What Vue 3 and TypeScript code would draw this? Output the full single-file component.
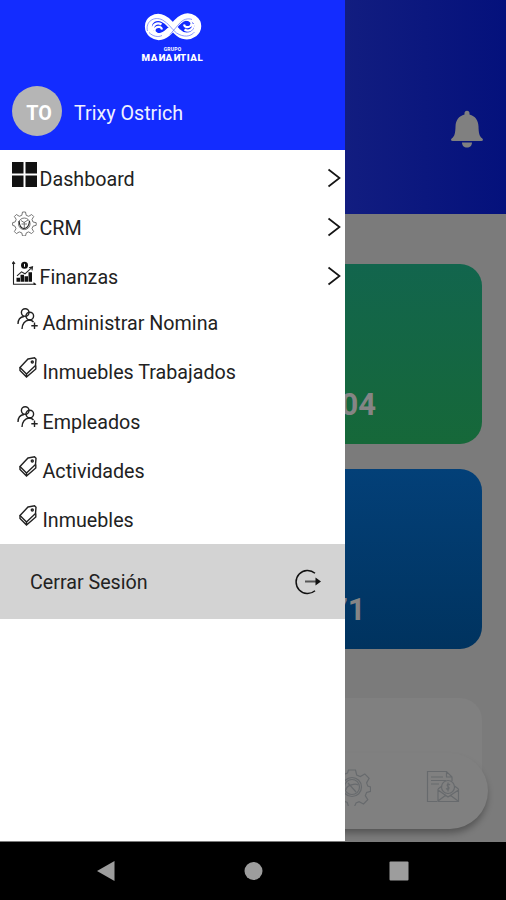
<script setup lang="ts">
type IconName = 'grid' | 'gear' | 'chart' | 'people' | 'tag'

interface MenuItem {
  label: string
  icon: IconName
}

const sections: MenuItem[] = [
  { label: 'Dashboard', icon: 'grid' },
  { label: 'CRM', icon: 'gear' },
  { label: 'Finanzas', icon: 'chart' },
]

const links: MenuItem[] = [
  { label: 'Administrar Nomina', icon: 'people' },
  { label: 'Inmuebles Trabajados', icon: 'tag' },
  { label: 'Empleados', icon: 'people' },
  { label: 'Actividades', icon: 'tag' },
  { label: 'Inmuebles', icon: 'tag' },
]
</script>

<template>
  <div class="device">
    <main class="page">
      <header class="page-header">
        <svg class="bell" viewBox="0 0 34 38">
          <path d="M14.5 3.2a2.5 2.5 0 0 1 5 0v1.200c5.8 1.500 8.800 6 9 12 .2 6 .6 9.500 3.600 11.900 1.400 1.200 1.200 2.700-.8 2.700H2.700c-2 0-2.200-1.500-.8-2.700 3-2.400 3.400-5.900 3.600-11.900.2-6 3.200-10.500 9-12zM12 32.500h10c0 3-2 5-5 5s-5-2-5-5z" />
        </svg>
      </header>
      <div class="cards">
        <section class="card green"><strong>04</strong></section>
        <section class="card blue"><strong>71</strong></section>
        <section class="card panel"></section>
      </div>
      <nav class="tabbar">
        <svg class="tab-gear" viewBox="0 0 38 38">
          <path d="M15.500 2h7l1.200 5 3.600 1.500 4.500-2.600 4.300 4.500-2.500 4.500 1.200 3.200 2.700.8v4.500l-3.900 1-1.300 3.200 2.500 4-4.300 4.400-4.400-2.400-3 1.300-1.600 3.600h-6l-1.200-4-3.300-1.400-4.200 2.300-4.200-4.300 2.300-4.200-1.400-3.300L.5 22.500v-6l3.500-1 1.600-3.500L3.300 8l4.400-4.200 4 2.300L14.500 5z" />
          <circle cx="19" cy="19" r="9.500" />
          <circle cx="19" cy="19" r="7.500" />
          <path d="M13 22c0-5 10-7 12-5M15 15l8 9" />
        </svg>
        <svg class="tab-mail" viewBox="0 0 34 34">
          <path d="M11 31.500H1.500V1.500h19l5.500 5.500v4M20.500 1.500V7H26M5 7h12M5 10.500h15M5 14h8M12 19v12.500h20.500V19M12 20l10 7 10.500-7M12 31l8-6M32 31l-8-6M12 19l4-3M32.500 19l-4-3" />
          <circle cx="22" cy="17" r="6.500" />
          <path d="M24 15c-2-2-4 0-2 1.500s1 4-2 2M22 12.500v9" />
        </svg>
      </nav>
    </main>

    <aside class="drawer">
      <header class="drawer-header">
        <div class="brand">
          <svg class="brand-mark" viewBox="0 0 58 30">
            <path class="band" d="M50 21.500c5-4 5-11 0-14.500-6-4-12-1.500-17 3.500l-8 9c-5 5-11 7-16.500 3-5.500-4.500-5.500-12 0-15.500 6-3.500 11.500-1 16.500 4l8 8.500c5 5 11.500 6 17 2z" />
            <path class="loop" d="M16 22.500c-5-.5-7-4-4.500-6.500 2.500-2 6-1.500 6.500 1.500M9 18c-1-5 4-8.500 8.500-5.500M42 7.500c5 .5 7 4 4.500 6.500-2.500 2-6 1.500-6.500-1.500M49 12c1 5-4 8.500-8.500 5.500" />
            <path class="groove" d="M3.500 19C1 10 10 3.500 18.500 8c6 3 9 9 14 13 7 4.500 14 4 18-1M26 22.500l9-10.500c4-5 9-6 13-4.500M5 20.500c4 4 9 5 13 3" />
          </svg>
          <small>GRUPO</small>
          <b>MA<i>N</i>A<i>N</i>TIAL</b>
        </div>
        <div class="profile">
          <span class="avatar">TO</span>
          <span class="user">Trixy Ostrich</span>
        </div>
      </header>

      <ul class="sections">
        <li v-for="item in sections" :key="item.label">
          <svg class="icon" viewBox="0 0 25 25">
            <path v-if="item.icon === 'grid'" class="solid" d="M0 0h11.500v11.500H0zM13.500 0H25v11.500H13.500zM0 13.500h11.500V25H0zM13.500 13.500H25V25H13.500z" />
            <g v-else-if="item.icon === 'gear'" class="thin">
              <path d="M10.500 1h3l.7 3.300 2.500 1 3-1.800 2 2-1.700 3 1 2.500 3.200.7v2.600l-3.200.9-1 2.400 1.600 3-2 2-3-1.700-2.300 1-.8 3h-3l-.7-3-2.500-1-2.900 1.700-2-2L4 17.700l-1-2.500-2.400-.9v-2.600l2.600-.8 1-2.600-1.800-2.800 2-2 2.900 1.800 2.500-1z" />
              <circle cx="12.300" cy="12.800" r="5.800" />
              <path class="medium" d="M7 10c.5 5 2 7.500 5 7.500s5-2.500 5.500-7.500" />
              <path d="M9 9.500l3 2 4-2.500M9.500 13h5.500M12.300 11v6" />
            </g>
            <g v-else transform="translate(0 .8)">
              <path class="medium" d="M1.500 1v22.500H23M0 3l1.500-2L3 3M21.500 22l2 1.500-2 1.500M5 15l4.500-4 3.500 2 7-6.500M17 7l3.500-1-.5 3.500" />
              <circle class="solid" cx="12.500" cy="4.500" r="3.500" />
              <path class="solid" d="M4.500 17H8v4H4.500zM8.500 14H12v7H8.500zM12.500 15.500H16V21h-3.500zM16.500 11.500H20V21h-3.500z" />
              <path class="coin" d="M12.500 3v3" />
            </g>
          </svg>
          <span>{{ item.label }}</span>
          <svg class="chevron" viewBox="0 0 14 20"><path d="M1.500 1.500l11 8.500-11 8.500" /></svg>
        </li>
      </ul>

      <ul class="links">
        <li v-for="item in links" :key="item.label">
          <svg class="icon-small" viewBox="0 0 22 22">
            <g v-if="item.icon === 'people'">
              <circle cx="8.200" cy="4.500" r="3.800" />
              <circle cx="12.800" cy="8" r="3.800" />
              <path d="M1 16c0-4.500 2-7 6-7.500M5 21c0-5 3-8.700 7-9 2 0 3.500.7 4.500 2M17.500 14.500v6.500M14.300 17.700h6.400" />
            </g>
            <g v-else>
              <path d="M11 2l6.500-1.200L19 2.300l-.5 6.200L9.500 17 3 10.500z" />
              <path d="M3 10.500v3L9.500 20l9.300-8V8.500M9.500 17v3" />
              <circle cx="15.300" cy="5" r="1" />
            </g>
          </svg>
          <span>{{ item.label }}</span>
        </li>
      </ul>

      <button class="logout" type="button">
        <span>Cerrar Sesión</span>
        <svg viewBox="0 0 26 26">
          <path d="M20 4.200A11.500 11.500 0 1 0 20 21.800" />
          <path class="shaft" d="M10 12.500h12" />
          <path class="tip" d="M20.500 8.500L26 12.500l-5.500 4z" />
        </svg>
      </button>
    </aside>

    <footer class="system-nav">
      <svg viewBox="0 0 20 22"><path d="M18.500 1v20L1 11z" /></svg>
      <svg viewBox="0 0 20 22"><circle cx="10.500" cy="11" r="9" /></svg>
      <svg viewBox="0 0 20 22"><rect x=".5" y="1.500" width="19" height="19" rx="1" /></svg>
    </footer>
  </div>
</template>

<style>
body {
  margin: 0;
}
</style>

<style scoped>
.device {
  position: relative;
  display: flex;
  flex-direction: column;
  width: 506px;
  height: 900px;
  overflow: hidden;
  background: #7b7b7b;
  font-family: Roboto, sans-serif;
}
ul {
  margin: 0;
  padding: 0;
  list-style: none;
}
svg {
  display: block;
  flex: none;
}
.page {
  position: relative;
  height: 842px;
  box-sizing: border-box;
  overflow: hidden;
}
.page-header {
  display: flex;
  justify-content: flex-end;
  height: 214px;
  box-sizing: border-box;
  padding: 110px 22px 0 0;
  background: linear-gradient(90deg, #232b86, #121d80 68%, #04117c);
}
.bell {
  width: 34px;
  height: 38px;
  fill: #808080;
}
.cards {
  display: grid;
  grid-template-rows: 180px 180px 130px;
  row-gap: 25px;
  padding: 50px 24px 0;
}
.cards .panel {
  margin-top: 24px;
}
.card {
  display: flex;
  justify-content: center;
  align-items: flex-end;
  box-sizing: border-box;
  border-radius: 22px;
  color: #858585;
  font-size: 31px;
}
.card strong {
  width: 246px;
  text-align: right;
  line-height: 36px;
}
.green {
  background: linear-gradient(#12654d, #166839);
  padding-bottom: 21px;
}
.blue {
  background: linear-gradient(#034078, #00335f);
  padding-bottom: 21px;
}
.blue strong {
  width: 225px;
}
.panel {
  background: #808080;
}
.tabbar {
  position: absolute;
  left: 18px;
  right: 18px;
  bottom: 13px;
  display: flex;
  align-items: center;
  justify-content: flex-end;
  gap: 55px;
  height: 76px;
  box-sizing: border-box;
  padding: 0 28px 8px 0;
  border-radius: 38px;
  background: #808080;
  box-shadow: 0 5px 7px -1px rgba(0, 0, 0, 0.32);
}
.tabbar svg {
  fill: none;
  stroke: #676a6d;
  stroke-width: 1.2;
}
.tab-gear {
  width: 38px;
  height: 38px;
}
.tab-mail {
  width: 34px;
  height: 34px;
}
.drawer {
  position: absolute;
  top: 0;
  left: 0;
  width: 345px;
  height: 841px;
  background: #fff;
  color: #222;
  font-size: 19.700px;
  line-height: 24px;
}
.drawer-header {
  height: 150px;
  box-sizing: border-box;
  padding-top: 12px;
  background: #132cff;
  color: #f0f1ff;
}
.brand {
  display: flex;
  flex-direction: column;
  align-items: center;
  height: 74px;
  color: #fff;
}
.brand-mark {
  width: 58px;
  height: 30px;
  fill: none;
}
.band {
  stroke: #fff;
  stroke-width: 7;
}
.loop {
  stroke: #fff;
  stroke-width: 2.2;
}
.groove {
  stroke: #6f80ff;
  stroke-width: 0.8;
}
.brand small {
  margin-top: 4px;
  font-size: 5px;
  font-weight: 700;
  line-height: 6px;
  letter-spacing: 0.2px;
}
.brand b {
  font-size: 9.700px;
  font-weight: 900;
  line-height: 11px;
  letter-spacing: 0.6px;
}
.brand i {
  display: inline-block;
  font-style: normal;
  transform: scaleX(-1);
}
.profile {
  display: flex;
  align-items: center;
  gap: 12px;
  padding-left: 12px;
}
.user {
  padding-top: 6px;
}
.avatar {
  width: 50px;
  height: 50px;
  border-radius: 50%;
  background: #b5b5b5;
  color: #fff;
  font-weight: 700;
  line-height: 56px;
  text-align: center;
  text-indent: 4px;
}
.sections {
  height: 148px;
}
.sections li {
  display: flex;
  align-items: flex-start;
  height: 49.200px;
  box-sizing: border-box;
  padding: 12px 4px 0 12px;
}
.sections span {
  flex: 1;
  padding: 6px 0 0 2.500px;
}
.icon {
  width: 25px;
  height: 25px;
  fill: none;
}
.solid {
  fill: #111;
}
.thin {
  stroke: #666;
  stroke-width: 0.9;
}
.medium {
  stroke: #222;
  stroke-width: 1.1;
}
.coin {
  stroke: #fff;
}
.chevron {
  width: 14px;
  height: 20px;
  margin-top: 6px;
  fill: none;
  stroke: #151515;
  stroke-width: 1.7;
}
.links {
  height: 246px;
}
.links li {
  display: flex;
  align-items: flex-start;
  height: 49.200px;
  box-sizing: border-box;
  padding: 10px 0 0 17px;
}
.links span {
  padding: 4.300px 0 0 3.500px;
}
.icon-small {
  width: 22px;
  height: 22px;
  fill: none;
  stroke: #222;
  stroke-width: 1.4;
}
.logout {
  display: flex;
  align-items: center;
  justify-content: space-between;
  width: 100%;
  height: 75px;
  padding: 1px 24px 0 30px;
  border: 0;
  background: #d3d3d3;
  color: #222;
  font: inherit;
}
.logout span {
  padding-top: 2px;
}
.logout svg {
  width: 26px;
  height: 26px;
  fill: none;
  stroke: #111;
  stroke-width: 1.5;
}
.logout .shaft {
  stroke: #555;
  stroke-width: 2;
}
.logout .tip {
  fill: #111;
  stroke: none;
}
.system-nav {
  display: flex;
  justify-content: space-between;
  align-items: center;
  height: 58px;
  box-sizing: border-box;
  padding: 0 97px 0 96px;
  background: #000;
}
.system-nav svg {
  width: 20px;
  height: 22px;
  fill: #9d9d9d;
}
</style>
